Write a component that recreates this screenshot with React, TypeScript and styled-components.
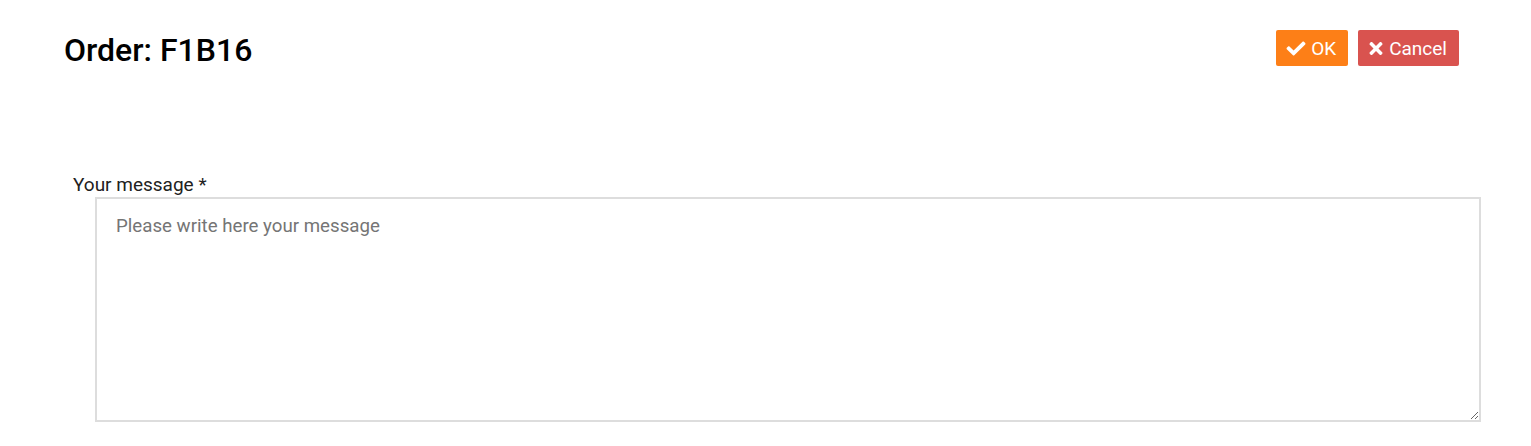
import React from 'react';
import styled, { createGlobalStyle } from 'styled-components';
import { FaCheck, FaTimes } from 'react-icons/fa';

const GlobalStyle = createGlobalStyle`
  html, body {
    margin: 0;
    padding: 0;
    background: #ffffff;
    font-family: Roboto, "Liberation Sans", Arial, sans-serif;
    color: #212121;
  }
`;

const Page = styled.div`
  padding: 30px 72px 0 64px;
`;

const Header = styled.div`
  display: flex;
  justify-content: space-between;
  align-items: flex-start;
`;

const Title = styled.h1`
  margin: 1px 0 0;
  font-size: 32px;
  line-height: 38px;
  font-weight: 500;
  color: #000;
`;

const Actions = styled.div`
  display: flex;
  gap: 10px;
`;

type Tone = 'ok' | 'cancel';

const ActionButton = styled.button<{ $tone: Tone }>`
  display: inline-flex;
  align-items: center;
  gap: 4px;
  height: 36px;
  padding: 0 12px 0 9px;
  border: none;
  border-radius: 2px;
  font-family: Roboto, "Liberation Sans", Arial, sans-serif;
  font-size: 19px;
  color: #fff;
  cursor: pointer;
  background: ${({ $tone }) => ($tone === 'ok' ? '#fd7f17' : '#d9534f')};

  svg {
    width: ${({ $tone }) => ($tone === 'ok' ? '22px' : '18px')};
    height: 19px;
  }
`;

const Form = styled.form`
  margin-top: 105px;
  padding-left: 9px;
`;

const Label = styled.label`
  display: block;
  font-size: 19px;
  line-height: 22px;
  color: #212121;
  margin-bottom: 1px;
`;

const MessageBox = styled.textarea`
  display: block;
  box-sizing: border-box;
  margin-left: 22px;
  width: 100%;
  height: 225px;
  border: 2px solid #dddddd;
  padding: 16px 19px 15px;
  font-family: Roboto, "Liberation Sans", Arial, sans-serif;
  font-size: 18.7px;
  color: #212121;
  outline: none;
  resize: vertical;

  &::placeholder {
    color: #757575;
  }
`;

export default function App() {
  return (
    <>
      <GlobalStyle />
      <Page>
        <Header>
          <Title>Order: F1B16</Title>
          <Actions>
            <ActionButton $tone="ok" type="button">
              <FaCheck /> OK
            </ActionButton>
            <ActionButton $tone="cancel" type="button">
              <FaTimes /> Cancel
            </ActionButton>
          </Actions>
        </Header>
        <Form>
          <Label htmlFor="message">Your message *</Label>
          <MessageBox id="message" placeholder="Please write here your message" />
        </Form>
      </Page>
    </>
  );
}
